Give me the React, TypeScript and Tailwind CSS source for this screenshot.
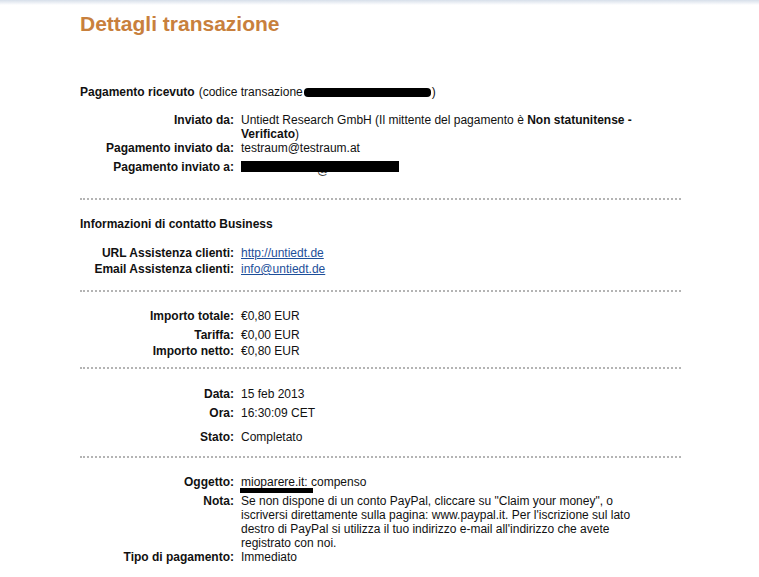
import React from 'react';

function Row({ label, children, className = '' }: { label: string; children: React.ReactNode; className?: string }) {
  return (
    <div className={`flex leading-[14px] ${className}`}>
      <div className="w-[154px] shrink-0 text-right font-bold">{label}</div>
      <div className="ml-[7px] w-[410px]">{children}</div>
    </div>
  );
}

function Dots({ className = '' }: { className?: string }) {
  return <div className={`w-[601px] border-t-2 border-dotted border-[#b4b4b4] ${className}`} />;
}

export default function App() {
  return (
    <div className="min-h-[577px] bg-white text-[12px] text-[#111] font-['Liberation_Sans',Arial,sans-serif]">
      <div className="h-[5px] bg-linear-to-b from-[#d7dfea] to-white" />
      <div className="pl-[80px]">
        <h1 className="mt-[7px] text-[21px] leading-[24px] font-bold text-[#c8803d]">Dettagli transazione</h1>

        <div className="mt-[49px] flex items-center leading-[15px]">
          <span className="font-bold">Pagamento ricevuto</span>
          <span className="ml-[4px]">(codice transazione</span>
          <span className="mx-[1px] inline-block h-[9px] w-[127px] rounded-[4px] bg-black" />
          <span>)</span>
        </div>

        <Row label="Inviato da:" className="mt-[13px]">
          Untiedt Research GmbH (Il mittente del pagamento è <b>Non statunitense -</b>
          <br />
          <b>Verificato</b>)
        </Row>
        <Row label="Pagamento inviato da:">testraum@testraum.at</Row>
        <Row label="Pagamento inviato a:" className="mt-[5px]">
          <div className="relative h-[14px]">
            <span className="absolute left-[76px] top-[3px] text-[#444]">@</span>
            <span className="absolute left-0 top-[1px] h-[11px] w-[158px] bg-black" />
          </div>
        </Row>

        <Dots className="mt-[24px]" />

        <div className="mt-[17px] font-bold leading-[14px]">Informazioni di contatto Business</div>
        <Row label="URL Assistenza clienti:" className="mt-[15px]">
          <a className="text-[#1d4f9a] underline">http://untiedt.de</a>
        </Row>
        <Row label="Email Assistenza clienti:" className="mt-[2px]">
          <a className="text-[#1d4f9a] underline">info@untiedt.de</a>
        </Row>

        <Dots className="mt-[14px]" />

        <Row label="Importo totale:" className="mt-[17px]">€0,80 EUR</Row>
        <Row label="Tariffa:" className="mt-[5px]">€0,00 EUR</Row>
        <Row label="Importo netto:" className="mt-[2px]">€0,80 EUR</Row>

        <Dots className="mt-[9px]" />

        <Row label="Data:" className="mt-[18px]">15 feb 2013</Row>
        <Row label="Ora:" className="mt-[5px]">16:30:09 CET</Row>
        <Row label="Stato:" className="mt-[10px]">Completato</Row>

        <Dots className="mt-[12px]" />

        <Row label="Oggetto:" className="mt-[17px]">
          <span className="relative inline-block">
            mioparere.it: compenso
            <span className="absolute left-[-1px] top-[13px] h-[5px] w-[73px] bg-black" />
          </span>
        </Row>
        <Row label="Nota:" className="mt-[5px] leading-[14.5px]">
          Se non dispone di un conto PayPal, cliccare su "Claim your money", o
          <br />
          iscriversi direttamente sulla pagina: www.paypal.it. Per l'iscrizione sul lato
          <br />
          destro di PayPal si utilizza il tuo indirizzo e-mail all'indirizzo che avete
          <br />
          registrato con noi.
        </Row>
        <Row label="Tipo di pagamento:">Immediato</Row>
      </div>
    </div>
  );
}
